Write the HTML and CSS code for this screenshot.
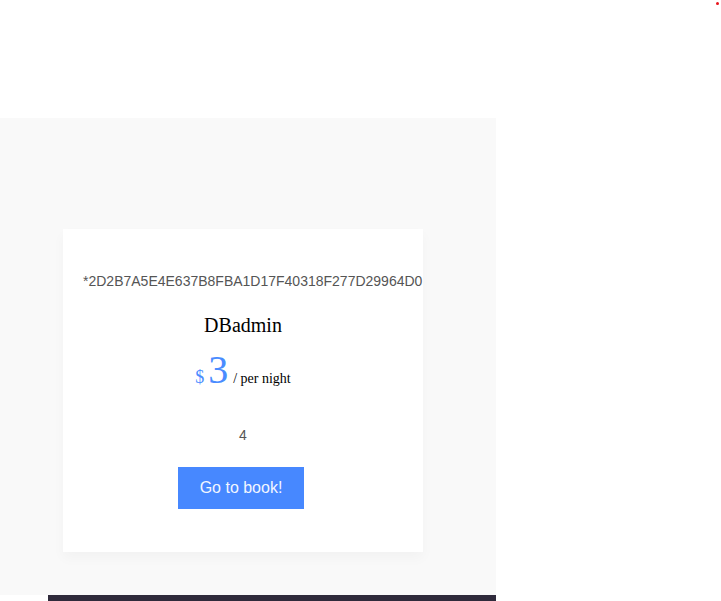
FILE: index.html
```html
<!DOCTYPE html>
<html>
<head>
<meta charset="utf-8">
<link rel="stylesheet" href="styles.css">
</head>
<body>
<header class="top">
  <span class="dot"></span>
</header>
<section class="rooms">
  <div class="card">
    <p class="hash">*2D2B7A5E4E637B8FBA1D17F40318F277D29964D0</p>
    <h3 class="name">DBadmin</h3>
    <p class="price"><span class="cur">$</span><span class="amount">3</span><span class="per">/ per night</span></p>
    <p class="count">4</p>
    <a class="btn" href="#">Go to book!</a>
  </div>
</section>
<div class="footer-bar"></div>
</body>
</html>
```
FILE: styles.css
```css
html, body {
  margin: 0;
  padding: 0;
  background: #fff;
}
body {
  font-family: "Liberation Sans", Arial, sans-serif;
  overflow: hidden;
  height: 601px;
}
.top {
  height: 118px;
  position: relative;
}
.dot {
  position: absolute;
  top: 2px;
  right: 2px;
  width: 3px;
  height: 3px;
  border-radius: 50%;
  background: #e8141b;
}
.rooms {
  width: 496px;
  background: #f9f9f9;
  padding: 111px 0 43px;
  box-sizing: border-box;
}
.card {
  margin-left: 63px;
  width: 360px;
  height: 323px;
  box-sizing: border-box;
  background: #fff;
  padding: 40px 20px 0;
  text-align: center;
  box-shadow: 0 6px 12px rgba(0,0,0,0.03);
}
.hash {
  margin: 0;
  font-size: 14px;
  line-height: 24px;
  color: #555;
  white-space: nowrap;
  text-align: left;
}
.name {
  margin: 20px 0 0;
  font-family: "Liberation Serif", "Times New Roman", serif;
  font-weight: normal;
  font-size: 20px;
  line-height: 24px;
  color: #000;
}
.price {
  margin: 10px 0 0;
  font-family: "Liberation Serif", "Times New Roman", serif;
  line-height: 46px;
  color: #000;
}
.cur {
  color: #4a8cff;
  font-size: 18px;
  margin-right: 4px;
}
.amount {
  color: #4a8cff;
  font-size: 40px;
  margin-right: 5px;
}
.per {
  font-size: 14px;
}
.count {
  margin: 23px 0 0;
  font-size: 14px;
  line-height: 20px;
  color: #555;
}
.btn {
  display: inline-block;
  margin-top: 22px;
  margin-left: -4px;
  width: 126px;
  height: 42px;
  line-height: 42px;
  background: #4788ff;
  color: #f2f6ff;
  font-size: 16px;
  text-decoration: none;
}
.footer-bar {
  margin-left: 48px;
  width: 448px;
  height: 20px;
  background: #2f2a3b;
}
```
